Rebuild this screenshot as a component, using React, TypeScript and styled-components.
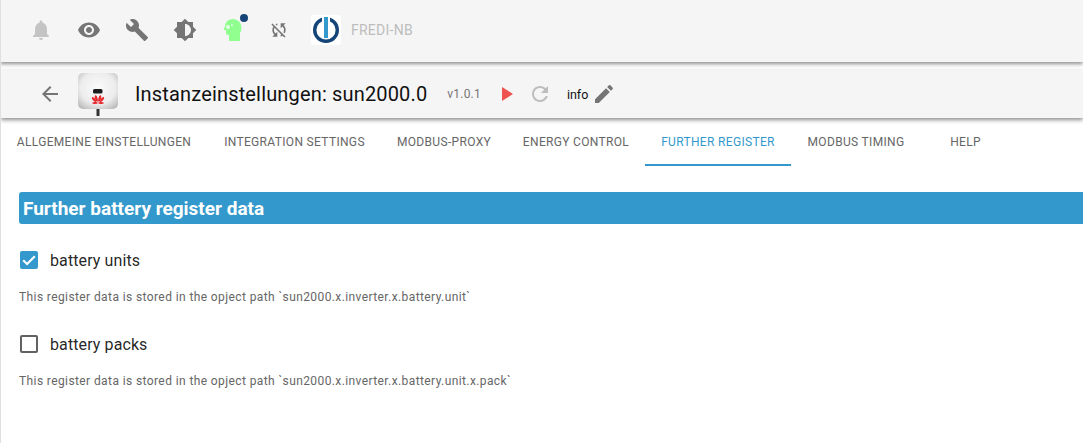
import styled, { createGlobalStyle } from 'styled-components';

const GlobalStyle = createGlobalStyle`
	html, body {
		margin: 0;
		padding: 0;
		background: #fff;
		font-family: Roboto, 'Liberation Sans', sans-serif;
	}
`;

const paths = {
	bell: 'M12 22c1.1 0 2-.9 2-2h-4c0 1.1.89 2 2 2zm6-6v-5c0-3.07-1.64-5.64-4.5-6.32V4c0-.83-.67-1.5-1.5-1.5s-1.5.67-1.5 1.5v.68C7.63 5.36 6 7.92 6 11v5l-2 2v1h16v-1l-2-2z',
	eye: 'M12 4.5C7 4.5 2.73 7.61 1 12c1.73 4.39 6 7.5 11 7.5s9.27-3.11 11-7.5c-1.73-4.39-6-7.5-11-7.5zM12 17c-2.76 0-5-2.24-5-5s2.24-5 5-5 5 2.24 5 5-2.24 5-5 5zm0-8c-1.66 0-3 1.34-3 3s1.34 3 3 3 3-1.34 3-3-1.34-3-3-3z',
	wrench: 'M22.7 19l-9.1-9.1c.9-2.3.4-5-1.5-6.9-2-2-5-2.4-7.4-1.3L9 6 6 9 1.6 4.7C.4 7.1.9 10.1 2.9 12.1c1.9 1.9 4.6 2.4 6.9 1.5l9.1 9.1c.4.4 1 .4 1.4 0l2.3-2.3c.5-.4.5-1.1.1-1.4z',
	brightness: 'M20 15.31L23.31 12 20 8.69V4h-4.69L12 .69 8.69 4H4v4.69L.69 12 4 15.31V20h4.69L12 23.31 15.31 20H20v-4.69zM12 18V6c3.31 0 6 2.69 6 6s-2.69 6-6 6z',
	syncOff: 'M10 6.35V4.26c-.8.21-1.55.54-2.23.96l1.46 1.46c.25-.12.5-.24.77-.33zm-7.14-.94l2.36 2.36C4.45 8.99 4 10.44 4 12c0 2.21.91 4.2 2.36 5.64L4 20h6v-6l-2.24 2.24C6.68 15.15 6 13.66 6 12c0-1 .25-1.94.68-2.77l8.08 8.08c-.25.13-.5.25-.77.34v2.09c.8-.21 1.55-.54 2.23-.96l2.36 2.36 1.27-1.27L4.14 4.14 2.86 5.41zM20 4h-6v6l2.24-2.24C17.32 8.85 18 10.34 18 12c0 1-.25 1.94-.68 2.77l1.46 1.46C19.55 15.01 20 13.56 20 12c0-2.21-.91-4.2-2.36-5.64L20 4z',
	back: 'M20 11H7.83l5.59-5.59L12 4l-8 8 8 8 1.41-1.41L7.83 13H20v-2z',
	play: 'M8 5v14l11-7z',
	refresh: 'M17.65 6.35C16.2 4.9 14.21 4 12 4c-4.42 0-7.99 3.58-7.99 8s3.57 8 7.99 8c3.73 0 6.84-2.55 7.73-6h-2.08c-.82 2.33-3.04 4-5.65 4-3.31 0-6-2.69-6-6s2.69-6 6-6c1.66 0 3.14.69 4.22 1.78L13 11h7V4l-2.35 2.35z',
	edit: 'M3 17.25V21h3.75L17.81 9.94l-3.75-3.75L3 17.25zM20.71 7.04c.39-.39.39-1.02 0-1.41l-2.34-2.34c-.39-.39-1.02-.39-1.41 0l-1.83 1.83 3.75 3.75 1.83-1.83z',
};

const tabs = [
	{ label: 'ALLGEMEINE EINSTELLUNGEN', width: 208 },
	{ label: 'INTEGRATION SETTINGS', width: 173 },
	{ label: 'MODBUS-PROXY', width: 126 },
	{ label: 'ENERGY CONTROL', width: 138 },
	{ label: 'FURTHER REGISTER', width: 146, active: true },
	{ label: 'MODBUS TIMING', width: 130 },
	{ label: 'HELP', width: 89 },
];

const Icon = ({ d, size = 24, color = '#757575' }: { d: string; size?: number; color?: string }) => (
	<svg width={size} height={size} viewBox='0 0 24 24' fill={color} style={{ flex: 'none' }}>
		<path d={d} />
	</svg>
);

const CheckMark = () => (
	<svg width={14} height={14} viewBox='0 0 14 14' fill='none' stroke='#fff' strokeWidth={2.1}>
		<path d='M1.2 7.2l3.9 3.9 7.7-7.9' />
	</svg>
);

const HeadIcon = () => (
	<svg width={24} height={24} viewBox='0 0 24 24'>
		<path
			fill='#90ff90'
			d='M12 1c-4 0-7.5 2.8-7.8 6.5L3 11c-.2.6.2 1 .7 1H5v3c0 1.2.8 2 2 2h1v6h11v-8c1-1.5 1.5-3 1.5-5C20.5 4.5 16.5 1 12 1z'
		/>
		<circle cx='7' cy='9' r='2' fill='#e4ffe4' />
		<circle cx='11' cy='7' r='1' fill='#d8ffd8' />
	</svg>
);

const AdapterImage = () => (
	<svg width={40} height={48} viewBox='0 0 40 48'>
		<defs>
			<radialGradient id='case' cx='0.5' cy='0.42' r='0.68'>
				<stop offset='0' stopColor='#fbfbfb' />
				<stop offset='0.65' stopColor='#ececec' />
				<stop offset='1' stopColor='#bdbdbd' />
			</radialGradient>
		</defs>
		<rect x='18.5' y='38' width='3' height='8' fill='#333' />
		<rect x='0' y='3' width='40' height='36' rx='5' fill='url(#case)' />
		<rect x='15' y='19' width='9.5' height='4.5' rx='1.5' fill='#1d1d1d' />
		<g fill='#e8262c'>
			<ellipse cx='16' cy='29.5' rx='1.3' ry='3' transform='rotate(-40 16 29.5)' />
			<ellipse cx='18.3' cy='28.5' rx='1.3' ry='3.4' transform='rotate(-14 18.3 28.5)' />
			<ellipse cx='21.7' cy='28.5' rx='1.3' ry='3.4' transform='rotate(14 21.7 28.5)' />
			<ellipse cx='24' cy='29.5' rx='1.3' ry='3' transform='rotate(40 24 29.5)' />
			<ellipse cx='17' cy='33' rx='2.8' ry='1.1' />
			<ellipse cx='23' cy='33' rx='2.8' ry='1.1' />
		</g>
	</svg>
);

const LogoIcon = () => (
	<LogoBox>
		<svg width={26} height={26} viewBox='0 0 26 26'>
			<circle cx='13' cy='13' r='11.3' fill='none' stroke='#144578' strokeWidth='3.4' />
			<rect x='9' y='0' width='8' height='5' fill='#fff' />
			<rect x='11' y='0' width='4' height='21' fill='#3399cc' />
		</svg>
	</LogoBox>
);

export default function App() {
	return (
		<Page>
			<GlobalStyle />
			<TopBar>
				<IconSlot>
					<Icon d={paths.bell} color='#c4c4c4' />
				</IconSlot>
				<IconSlot>
					<Icon d={paths.eye} />
				</IconSlot>
				<IconSlot>
					<Icon d={paths.wrench} />
				</IconSlot>
				<IconSlot>
					<Icon d={paths.brightness} />
				</IconSlot>
				<IconSlot>
					<HeadIcon />
					<Dot />
				</IconSlot>
				<SyncSlot>
					<Icon d={paths.syncOff} size={20} />
				</SyncSlot>
				<LogoIcon />
				<HostName>FREDI-NB</HostName>
			</TopBar>
			<InstanceBar>
				<BackSlot>
					<Icon d={paths.back} />
				</BackSlot>
				<AdapterImage />
				<Title>Instanzeinstellungen: sun2000.0</Title>
				<Version>v1.0.1</Version>
				<PlaySlot>
					<Icon d={paths.play} color='#ef5350' />
				</PlaySlot>
				<RefreshSlot>
					<Icon d={paths.refresh} color='#bdbdbd' />
				</RefreshSlot>
				<LogLevel>info</LogLevel>
				<Icon d={paths.edit} />
			</InstanceBar>
			<TabRow>
				{tabs.map((tab) => (
					<Tab key={tab.label} width={tab.width} active={tab.active}>
						{tab.label}
					</Tab>
				))}
			</TabRow>
			<Content>
				<SectionHeader>Further battery register data</SectionHeader>
				<OptionLabel>
					<CheckBox checked>
						<CheckMark />
					</CheckBox>
					battery units
				</OptionLabel>
				<HelpText>This register data is stored in the opject path `sun2000.x.inverter.x.battery.unit`</HelpText>
				<OptionLabel>
					<CheckBox />
					battery packs
				</OptionLabel>
				<HelpText>This register data is stored in the opject path `sun2000.x.inverter.x.battery.unit.x.pack`</HelpText>
			</Content>
		</Page>
	);
}

const Page = styled.div`
	width: 1083px;
	height: 443px;
	overflow: hidden;
	background: #fff;
	border-left: 1px solid #e0e0e0;
	box-sizing: border-box;
	position: relative;
`;

const TopBar = styled.div`
	height: 62px;
	margin-left: -1px;
	background: #f5f5f5;
	box-shadow: 0 2px 4px rgba(0, 0, 0, 0.45);
	display: flex;
	align-items: center;
	padding-left: 29px;
	position: relative;
`;

const IconSlot = styled.div`
	width: 48px;
	height: 24px;
	display: flex;
	align-items: center;
	justify-content: flex-start;
	position: relative;
	margin-top: -2px;
`;

const SyncSlot = styled(IconSlot)`
	width: 43px;
`;

const Dot = styled.span`
	position: absolute;
	left: 19px;
	top: -4px;
	width: 8px;
	height: 8px;
	border-radius: 50%;
	background: #164477;
`;

const LogoBox = styled.div`
	width: 30px;
	height: 30px;
	background: #fff;
	border-radius: 3px;
	display: flex;
	align-items: center;
	justify-content: center;
	margin: -2px 0 0 -1px;
`;

const HostName = styled.span`
	margin-left: 10px;
	margin-top: -2px;
	font-size: 14px;
	letter-spacing: 0.25px;
	color: #bdbdbd;
`;

const InstanceBar = styled.div`
	height: 48px;
	margin-top: 8px;
	background: #f5f5f5;
	box-shadow: 0 2px 4px rgba(0, 0, 0, 0.45);
	display: flex;
	align-items: center;
	padding-left: 37px;
	color: rgba(0, 0, 0, 0.87);
`;

const BackSlot = styled.div`
	display: flex;
	margin-right: 16px;
`;

const Title = styled.span`
	margin-left: 17px;
	font-size: 20px;
	letter-spacing: 0.16px;
	color: #111;
`;

const Version = styled.span`
	margin-left: 20px;
	font-size: 12px;
	letter-spacing: 0.2px;
	color: #757575;
`;

const PlaySlot = styled.div`
	display: flex;
	margin-left: 13px;
`;

const RefreshSlot = styled.div`
	display: flex;
	margin-left: 10px;
`;

const LogLevel = styled.span`
	margin-left: 15px;
	margin-right: 4px;
	font-size: 12.5px;
	color: #111;
`;

const TabRow = styled.div`
	display: flex;
	height: 48px;
	margin-left: -1px;
`;

const Tab = styled.div<{ width: number; active?: boolean }>`
	width: ${(props) => props.width}px;
	flex: none;
	box-sizing: border-box;
	display: flex;
	align-items: center;
	justify-content: center;
	padding-top: 2px;
	font-size: 12px;
	letter-spacing: 0.33px;
	color: ${(props) => (props.active ? '#3399cc' : '#666')};
	border-bottom: 2px solid ${(props) => (props.active ? '#3399cc' : 'transparent')};
	white-space: nowrap;
`;

const Content = styled.div`
	padding: 26px 0 0 18px;
`;

const SectionHeader = styled.div`
	height: 32px;
	line-height: 34px;
	padding-left: 4px;
	background: #3399cc;
	border-radius: 3px 0 0 3px;
	color: #fff;
	font-size: 19px;
	font-weight: 700;
`;

const OptionLabel = styled.div`
	display: flex;
	align-items: center;
	margin-top: 27px;
	height: 18px;
	font-size: 16px;
	letter-spacing: 0.1px;
	color: rgba(0, 0, 0, 0.87);
`;

const CheckBox = styled.span<{ checked?: boolean }>`
	width: 18px;
	height: 18px;
	box-sizing: border-box;
	margin-left: 1px;
	margin-right: 12px;
	border-radius: 2px;
	display: flex;
	align-items: center;
	justify-content: center;
	background: ${(props) => (props.checked ? '#3399cc' : 'transparent')};
	border: 2px solid ${(props) => (props.checked ? '#3399cc' : '#616161')};
`;

const HelpText = styled.div`
	margin-top: 21px;
	font-size: 12px;
	letter-spacing: 0.4px;
	color: #666;
	& + div {
		margin-top: 31px;
	}
`;
